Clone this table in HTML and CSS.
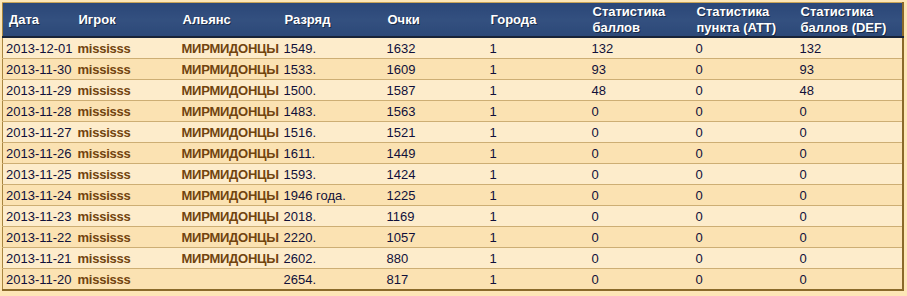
FILE: index.html
```html
<!DOCTYPE html>
<html>
<head>
<meta charset="utf-8">
<link rel="stylesheet" href="styles.css">
</head>
<body>
<table class="stats">
  <colgroup>
    <col class="c-date"><col class="c-w2"><col class="c-w"><col class="c-w3"><col class="c-w3"><col class="c-w"><col class="c-w4"><col class="c-w4"><col>
  </colgroup>
  <thead>
    <tr>
      <th>Дата</th><th>Игрок</th><th>Альянс</th><th>Разряд</th><th>Очки</th><th>Города</th>
      <th>Статистика<br>баллов</th><th>Статистика<br>пункта (ATT)</th><th>Статистика<br>баллов (DEF)</th>
    </tr>
  </thead>
  <tbody>
    <tr><td>2013-12-01</td><td class="name">mississs</td><td class="name">МИРМИДОНЦЫ</td><td>1549.</td><td>1632</td><td>1</td><td>132</td><td>0</td><td>132</td></tr>
    <tr><td>2013-11-30</td><td class="name">mississs</td><td class="name">МИРМИДОНЦЫ</td><td>1533.</td><td>1609</td><td>1</td><td>93</td><td>0</td><td>93</td></tr>
    <tr><td>2013-11-29</td><td class="name">mississs</td><td class="name">МИРМИДОНЦЫ</td><td>1500.</td><td>1587</td><td>1</td><td>48</td><td>0</td><td>48</td></tr>
    <tr><td>2013-11-28</td><td class="name">mississs</td><td class="name">МИРМИДОНЦЫ</td><td>1483.</td><td>1563</td><td>1</td><td>0</td><td>0</td><td>0</td></tr>
    <tr><td>2013-11-27</td><td class="name">mississs</td><td class="name">МИРМИДОНЦЫ</td><td>1516.</td><td>1521</td><td>1</td><td>0</td><td>0</td><td>0</td></tr>
    <tr><td>2013-11-26</td><td class="name">mississs</td><td class="name">МИРМИДОНЦЫ</td><td>1611.</td><td>1449</td><td>1</td><td>0</td><td>0</td><td>0</td></tr>
    <tr><td>2013-11-25</td><td class="name">mississs</td><td class="name">МИРМИДОНЦЫ</td><td>1593.</td><td>1424</td><td>1</td><td>0</td><td>0</td><td>0</td></tr>
    <tr><td>2013-11-24</td><td class="name">mississs</td><td class="name">МИРМИДОНЦЫ</td><td>1946 года.</td><td>1225</td><td>1</td><td>0</td><td>0</td><td>0</td></tr>
    <tr><td>2013-11-23</td><td class="name">mississs</td><td class="name">МИРМИДОНЦЫ</td><td>2018.</td><td>1169</td><td>1</td><td>0</td><td>0</td><td>0</td></tr>
    <tr><td>2013-11-22</td><td class="name">mississs</td><td class="name">МИРМИДОНЦЫ</td><td>2220.</td><td>1057</td><td>1</td><td>0</td><td>0</td><td>0</td></tr>
    <tr><td>2013-11-21</td><td class="name">mississs</td><td class="name">МИРМИДОНЦЫ</td><td>2602.</td><td>880</td><td>1</td><td>0</td><td>0</td><td>0</td></tr>
    <tr><td>2013-11-20</td><td class="name">mississs</td><td class="name"></td><td>2654.</td><td>817</td><td>1</td><td>0</td><td>0</td><td>0</td></tr>
  </tbody>
</table>
</body>
</html>
```
FILE: styles.css
```css
html, body {
  margin: 0;
  padding: 0;
  background: #fde6b6;
}
body {
  padding: 2px 0 0 2px;
  font-family: "Liberation Sans", Arial, sans-serif;
  font-size: 13px;
}
.stats {
  width: 902px;
  border-collapse: collapse;
  table-layout: fixed;
  border-style: solid;
  border-width: 1px 2px 2px 1px;
  border-color: #c9a458 #8a6a2a #8a6a2a #a8853f;
}
.c-date { width: 72px; }
.c-w2 { width: 104px; }
.c-w { width: 102px; }
.c-w3 { width: 103px; }
.c-w4 { width: 104px; }
.stats th {
  background: linear-gradient(#2b4778, #33507f 50%, #2c4878);
  color: #fff;
  font-weight: bold;
  text-align: left;
  padding: 0 3px 0 4px;
  height: 33px;
  line-height: 16px;
  border-bottom: 2px solid #182338;
  text-shadow: 1px 1px 0 rgba(0,0,0,0.45);
  vertical-align: middle;
}
.stats th:first-child { padding-left: 6px; }
.stats td {
  height: 20px;
  padding: 0 3px 0 3px;
  color: #10103a;
  border-bottom: 1px solid #cdae74;
  white-space: nowrap;
  vertical-align: middle;
}
.stats tbody tr:nth-child(odd) td { background: #fdeccb; }
.stats tbody tr:nth-child(even) td { background: #fbe2b2; }
.stats tbody tr:last-child td { border-bottom: none; }
.stats td.name {
  color: #71440f;
  font-weight: bold;
  letter-spacing: -0.25px;
}
```
